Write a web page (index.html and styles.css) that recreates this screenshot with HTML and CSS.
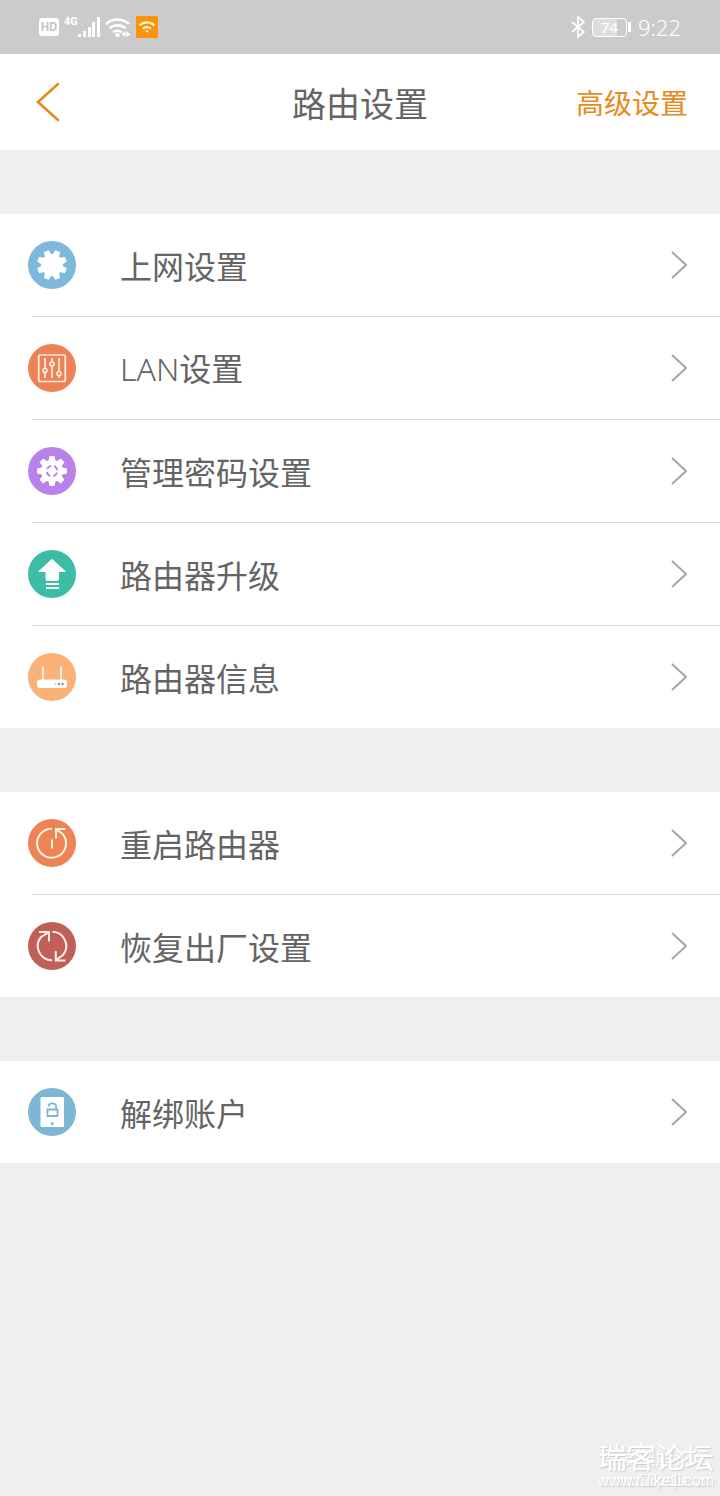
FILE: index.html
```html
<!DOCTYPE html>
<html lang="zh-CN">
<head>
    <meta charset="UTF-8">
    <meta name="viewport" content="width=device-width, initial-scale=1.0">
    <title>路由设置</title>
    <link rel="stylesheet" href="styles.css">
</head>
<body>
    <div class="status-bar">
        <div class="status-left">
            <span class="hd">HD</span>
            <div class="signal">
                <span class="network">4G</span>
                <svg viewBox="0 0 22 22" width="22" height="22" fill="currentColor">
                    <path d="M0 18h3v3H0zM5 15h3v6H5zM10 11h3v10h-3zM14 6h3v15h-3zM19 1h3v20h-3z"></path>
                </svg>
            </div>
            <svg class="wifi" viewBox="0 0 26 22" width="26" height="22" stroke="currentColor" stroke-width="2.4" fill="none">
                <path d="M1 8a17 17 0 0 1 23 0M4.500 12.500a11.500 11.500 0 0 1 16 0M8 16.500a6.500 6.500 0 0 1 9 0"></path>
                <circle cx="12.500" cy="19" r="2.300" fill="currentColor" stroke="none"></circle>
                <path d="M20.500 15v6l-4-2.500zM21.500 15v6l4-2.500z" fill="currentColor" stroke="none"></path>
            </svg>
            <svg class="wifi-app" viewBox="0 0 22 22" width="22" height="22" stroke="#fff3cf" stroke-width="2.200" fill="none">
                <rect width="22" height="22" fill="#fb930b" stroke="none"></rect>
                <path d="M3.500 9.500a10.500 10.500 0 0 1 15 0M7 12.800a5.600 5.600 0 0 1 8 0"></path>
                <circle cx="11" cy="15.300" r="1.300" fill="#fff3cf" stroke="none"></circle>
            </svg>
        </div>
        <div class="status-right">
            <svg viewBox="0 0 14 22" width="14" height="22" stroke="currentColor" stroke-width="1.700" fill="none">
                <path d="M1 6l12 10-6 5V1l6 5L1 16"></path>
            </svg>
            <div class="battery"><span class="battery-level">74</span></div>
            <span class="time">9:22</span>
        </div>
    </div>

    <header class="header">
        <a class="back" href="#" aria-label="返回">
            <svg viewBox="0 0 24 40" width="24" height="40" stroke="currentColor" stroke-width="2.600" stroke-linecap="round" fill="none">
                <path d="M22 2L2 20l20 18"></path>
            </svg>
        </a>
        <h1>路由设置</h1>
        <a class="advanced" href="#">高级设置</a>
    </header>

    <main>
        <ul class="menu">
            <li>
                <a class="menu-item" href="#">
                    <svg class="icon" viewBox="0 0 48 48">
                        <circle cx="24" cy="24" r="24" fill="#7fb8da"></circle>
                        <g fill="#fff">
                            <circle cx="24" cy="24" r="11"></circle>
                            <g id="teeth" transform="rotate(22.500 24 24)">
                                <path id="tooth" d="M20.600 14l.6-4q.2-1 1-1h3.600q.8 0 1 1l.6 4v20l-.6 4q-.2 1-1 1h-3.600q-.8 0-1-1l-.6-4z"></path>
                                <use href="#tooth" transform="rotate(45 24 24)"></use>
                                <use href="#tooth" transform="rotate(90 24 24)"></use>
                                <use href="#tooth" transform="rotate(135 24 24)"></use>
                            </g>
                        </g>
                    </svg>
                    <span class="label">上网设置</span>
                    <svg class="arrow" viewBox="0 0 16 28"><path d="M1 1l14 13L1 27"></path></svg>
                </a>
            </li>
            <li>
                <a class="menu-item" href="#">
                    <svg class="icon" viewBox="0 0 48 48" stroke="#fff1e4" stroke-width="1.700" fill="none">
                        <circle cx="24" cy="24" r="24" fill="#ee8155" stroke="none"></circle>
                        <rect x="10.700" y="11" width="26.600" height="26.500" rx="2"></rect>
                        <path d="M17 14v10M17 29v5M24 14v4M24 22.500V34M31 14v13M31 32v2"></path>
                        <circle cx="17" cy="26.500" r="2"></circle>
                        <circle cx="24" cy="20" r="2"></circle>
                        <circle cx="31" cy="29.500" r="2"></circle>
                    </svg>
                    <span class="label"><span class="latin">LAN</span>设置</span>
                    <svg class="arrow" viewBox="0 0 16 28"><path d="M1 1l14 13L1 27"></path></svg>
                </a>
            </li>
            <li>
                <a class="menu-item" href="#">
                    <svg class="icon" viewBox="0 0 48 48">
                        <circle cx="24" cy="24" r="24" fill="#b882ea"></circle>
                        <g fill="#fff">
                            <circle cx="24" cy="24" r="11"></circle>
                            <!-- 齿轮与上网设置相同，转过半个齿 -->
                            <use href="#teeth" transform="rotate(22.500 24 24)"></use>
                        </g>
                        <circle cx="24" cy="24" r="5.200" fill="none" stroke="#b882ea" stroke-width="1.900" stroke-dasharray="5.200 2.968" stroke-dashoffset="-1.500"></circle>
                    </svg>
                    <span class="label">管理密码设置</span>
                    <svg class="arrow" viewBox="0 0 16 28"><path d="M1 1l14 13L1 27"></path></svg>
                </a>
            </li>
            <li>
                <a class="menu-item" href="#">
                    <svg class="icon" viewBox="0 0 48 48">
                        <circle cx="24" cy="24" r="24" fill="#3cbda5"></circle>
                        <path d="M23.200 9.500q.8-.8 1.600 0L36.800 20.500q1.200 1.500-.6 1.500H31v7q0 2-2 2H19.500q-2 0-2-2v-7H11.800q-1.800 0-.6-1.500z" fill="#fff"></path>
                        <path d="M18 34h13M18 38h13" stroke="#fff" stroke-width="1.800"></path>
                    </svg>
                    <span class="label">路由器升级</span>
                    <svg class="arrow" viewBox="0 0 16 28"><path d="M1 1l14 13L1 27"></path></svg>
                </a>
            </li>
            <li>
                <a class="menu-item" href="#">
                    <svg class="icon" viewBox="0 0 48 48">
                        <circle cx="24" cy="24" r="24" fill="#f9b176"></circle>
                        <path d="M15 14v14M33 14v14" stroke="#fff" stroke-width="1.600" stroke-linecap="round"></path>
                        <rect x="9" y="26.500" width="30" height="8.500" rx="3" fill="#fff"></rect>
                        <g fill="#a8866c">
                            <circle cx="27.500" cy="31" r="1" fill="#ddc4ae"></circle>
                            <circle cx="31" cy="31" r="1.200"></circle>
                            <circle cx="34.500" cy="31" r="1.200"></circle>
                        </g>
                    </svg>
                    <span class="label">路由器信息</span>
                    <svg class="arrow" viewBox="0 0 16 28"><path d="M1 1l14 13L1 27"></path></svg>
                </a>
            </li>
        </ul>

        <ul class="menu">
            <li>
                <a class="menu-item" href="#">
                    <svg class="icon" viewBox="0 0 48 48" stroke="#fff1e4" stroke-width="2" fill="none">
                        <circle cx="24" cy="24" r="24" fill="#ed8453" stroke="none"></circle>
                        <path d="M24 9.700A14.500 14.500 0 1 0 35 15.300L28 10M24 20.500v9M28 19.500V10h9.500"></path>
                    </svg>
                    <span class="label">重启路由器</span>
                    <svg class="arrow" viewBox="0 0 16 28"><path d="M1 1l14 13L1 27"></path></svg>
                </a>
            </li>
            <li>
                <a class="menu-item" href="#">
                    <svg class="icon" viewBox="0 0 48 48" stroke="#fff1ea" stroke-width="2" fill="none">
                        <circle cx="24" cy="24" r="24" fill="#bf5f58" stroke="none"></circle>
                        <path d="M24 38.200A14.200 14.200 0 0 1 13 15L20.500 10.500M11 10h10v9.500M24.500 9.800A14.200 14.200 0 0 1 35 33L28 38M27.800 29v9.500h9.700"></path>
                    </svg>
                    <span class="label">恢复出厂设置</span>
                    <svg class="arrow" viewBox="0 0 16 28"><path d="M1 1l14 13L1 27"></path></svg>
                </a>
            </li>
        </ul>

        <ul class="menu">
            <li>
                <a class="menu-item" href="#">
                    <svg class="icon" viewBox="0 0 48 48">
                        <circle cx="24" cy="24" r="24" fill="#7fb6d6"></circle>
                        <rect x="12.500" y="9" width="23.500" height="30" rx="1.500" fill="#fff"></rect>
                        <path d="M19.500 21.500h10v6.500h-10zM20.800 18.500v-.5a3.600 2.700 0 0 1 7.200 0v3.500" fill="none" stroke="#7fb6d6" stroke-width="1.800"></path>
                        <circle cx="24.300" cy="35.700" r="1.400" fill="#7fa6bd"></circle>
                    </svg>
                    <span class="label">解绑账户</span>
                    <svg class="arrow" viewBox="0 0 16 28"><path d="M1 1l14 13L1 27"></path></svg>
                </a>
            </li>
        </ul>
    </main>

    <!-- 两层论坛水印 -->
    <div class="watermark">
        <div class="mark mark-small">
            <p>吾爱破解论坛</p>
            <p class="url">www.52pojie.cn</p>
        </div>
        <div class="mark">
            <p>瑞客论坛</p>
            <p class="url">www.ruike1.com</p>
        </div>
    </div>
</body>
</html>
```
FILE: styles.css
```css
:root {
    --primary-color: #e8891c;
    --text-color: #646464;
    --border-color: #d9d9d9;
    --page-color: #efefef;
}

* {
    margin: 0;
    padding: 0;
    box-sizing: border-box;
}

body {
    position: relative;
    min-height: 100vh;
    background-color: var(--page-color);
    color: var(--text-color);
    font-family: "Noto Sans CJK SC", "Noto Sans", sans-serif;
}

a {
    color: inherit;
    text-decoration: none;
}

svg {
    display: block;
    flex-shrink: 0;
}

.status-bar {
    display: flex;
    justify-content: space-between;
    align-items: center;
    height: 54px;
    padding: 0 39px;
    background-color: #cbcbcb;
    color: #fff;
}

.status-left,
.status-right {
    display: flex;
    align-items: center;
    gap: 5px;
}

.status-right {
    gap: 7px;
}

.hd {
    width: 20px;
    height: 18px;
    border-radius: 3px;
    background-color: #fff;
    color: #c4c4c4;
    font: bold 12px/18px Roboto, sans-serif;
    text-align: center;
}

.signal {
    display: flex;
    align-items: flex-start;
}

.network {
    font: bold 11px/12px Roboto, sans-serif;
}

.battery {
    display: flex;
    align-items: center;
    gap: 1px;
}

.battery::after {
    content: "";
    width: 3px;
    height: 10px;
    background-color: #fff;
}

.battery-level {
    width: 35px;
    height: 19px;
    border: 1px solid #fff;
    border-radius: 4px;
    background: linear-gradient(to right, #dedede 74%, transparent 74%);
    font: 15px/17px "Noto Sans", sans-serif;
    text-align: center;
}

.time {
    font: 300 22px/32px "Noto Sans", sans-serif;
}

.header {
    display: grid;
    grid-template-columns: 1fr auto 1fr;
    align-items: center;
    height: 96px;
    padding: 0 32px;
    background-color: #fff;
}

.header h1 {
    font-size: 34px;
    font-weight: 400;
}

.back,
.advanced {
    color: var(--primary-color);
}

.back {
    padding-left: 4px;
}

.advanced {
    justify-self: end;
    font-size: 28px;
}

.menu {
    margin-top: 64px;
    background-color: #fff;
    list-style: none;
}

.menu li + li::before {
    content: "";
    display: block;
    height: 1px;
    margin-left: 32px;
    background-color: var(--border-color);
}

.menu-item {
    display: flex;
    align-items: center;
    height: 102px;
    padding: 0 33px 0 28px;
}

.icon {
    width: 48px;
    height: 48px;
    margin-right: 44px;
}

.label {
    flex: 1;
    font-size: 32px;
    line-height: 48px;
}

.latin {
    font-family: "Noto Sans", sans-serif;
    font-weight: 300;
}

.arrow {
    width: 16px;
    height: 28px;
    fill: none;
    stroke: #a6a6a6;
    stroke-width: 2;
}

.watermark {
    position: absolute;
    right: 6px;
    bottom: 6px;
    display: grid;
    justify-items: center;
    align-items: end;
    color: #fff;
    text-shadow: 1px 1px 1px #ccc;
}

.mark {
    grid-area: 1 / 1;
    font-size: 29px;
    line-height: 32px;
    text-align: center;
}

.mark-small {
    font-size: 18px;
    line-height: 30px;
}

.url {
    font: 16px/18px "Liberation Sans", sans-serif;
}
```
